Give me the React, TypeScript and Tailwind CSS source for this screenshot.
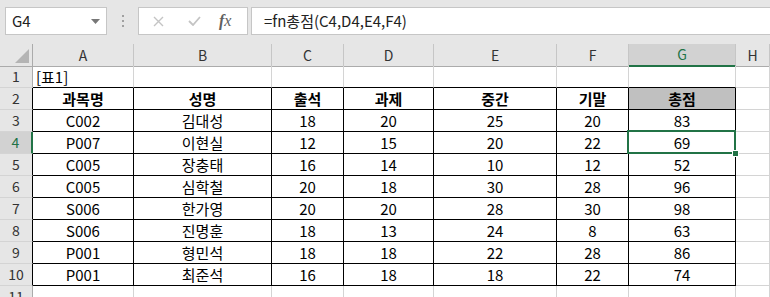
import React from 'react';

const cols = ['A', 'B', 'C', 'D', 'E', 'F', 'G', 'H'];

const rows: string[][] = [
  ['C002', '김대성', '18', '20', '25', '20', '83'],
  ['P007', '이현실', '12', '15', '20', '22', '69'],
  ['C005', '장충태', '16', '14', '10', '12', '52'],
  ['C005', '심학철', '20', '18', '30', '28', '96'],
  ['S006', '한가영', '20', '20', '28', '30', '98'],
  ['S006', '진명훈', '18', '13', '24', '8', '63'],
  ['P001', '형민석', '18', '18', '22', '28', '86'],
  ['P001', '최준석', '16', '18', '18', '22', '74'],
];

const heads = ['과목명', '성명', '출석', '과제', '중간', '기말', '총점'];

const gridCols = 'grid grid-cols-[33px_101px_138px_72px_90px_123px_72px_107px_1fr]';
const font = { fontFamily: '"Noto Sans CJK KR", "Noto Sans", sans-serif' };

export default function App() {
  return (
    <div className="w-[770px] h-[297px] overflow-hidden bg-[#e6e6e6] text-[15px] text-black" style={font}>
      {/* formula bar */}
      <div className="h-[44px] flex items-start pt-[7px] pl-[5px]">
        <div className="w-[102px] h-[28px] bg-white border border-[#c6c6c6] flex items-center justify-between pl-[6px] pr-[6px]">
          <span className="text-[15px] text-[#222]">G4</span>
          <svg width="9" height="5" viewBox="0 0 9 5"><path d="M0 0h9L4.5 5z" fill="#777" /></svg>
        </div>
        <div className="w-[31px] h-[28px] flex flex-col items-center justify-center gap-[3px]">
          <span className="w-[2px] h-[2px] bg-[#a0a0a0]" />
          <span className="w-[2px] h-[2px] bg-[#a0a0a0]" />
          <span className="w-[2px] h-[2px] bg-[#a0a0a0]" />
        </div>
        <div className="w-[110px] h-[28px] bg-white border border-[#c6c6c6] flex items-center">
          <svg className="ml-[14px]" width="11" height="11" viewBox="0 0 11 11">
            <path d="M1 1l9 9M10 1l-9 9" stroke="#c4c4c4" strokeWidth="1.4" />
          </svg>
          <svg className="ml-[24px]" width="13" height="10" viewBox="0 0 13 10">
            <path d="M1 5l4 4 7-8" stroke="#c4c4c4" strokeWidth="1.8" fill="none" />
          </svg>
          <span className="ml-[18px] text-[16px] italic font-bold text-[#606060]" style={{ fontFamily: '"Liberation Serif", serif' }}>
            f<span className="font-normal">x</span>
          </span>
        </div>
        <div className="flex-1 ml-[3px] h-[28px] bg-white border border-[#c6c6c6] border-r-0 flex items-center pl-[12px] text-[15px] text-[#222]">
          =fn총점(C4,D4,E4,F4)
        </div>
      </div>

      {/* column headers */}
      <div className={`${gridCols} h-[22px]`}>
        <div className="relative border-r border-b border-[#ababab]">
          <svg className="absolute right-[3px] bottom-[3px]" width="14" height="14" viewBox="0 0 14 14">
            <path d="M14 0V14H0z" fill="#b4b4b4" />
          </svg>
        </div>
        {cols.map((c) => (
          <div
            key={c}
            className={`flex items-center justify-center text-[14px] border-r border-[#c6c6c6] ${
              c === 'G' ? 'bg-[#d2d2d2] text-[#217346] border-b-2 border-b-[#217346]' : 'text-[#333] border-b border-b-[#ababab]'
            }`}
          >
            {c}
          </div>
        ))}
      </div>

      {/* rows */}
      <div className="bg-white">
        {Array.from({ length: 11 }).map((_, i) => {
          const r = i + 1;
          const inTable = r >= 2 && r <= 10;
          const sel = r === 4;
          return (
            <div key={r} className={`${gridCols} h-[22px]`}>
              <div
                className={`flex items-center justify-center text-[14px] border-b border-b-[#d4d4d4] ${
                  sel
                    ? 'bg-[#d2d2d2] text-[#217346] border-r-2 border-r-[#217346]'
                    : inTable
                    ? 'bg-[#e6e6e6] text-[#333] border-r border-r-black'
                    : 'bg-[#e6e6e6] text-[#333] border-r border-r-[#ababab]'
                }`}
              >
                {r}
              </div>
              {cols.map((c, ci) => {
                const tableCol = ci < 7;
                let cls = 'flex items-center leading-none border-r border-b ';
                cls += r === 1 && c === 'A' ? 'justify-start ' : 'justify-center ';
                if (r === 1) {
                  cls += tableCol ? 'border-r-[#d4d4d4] border-b-black ' : 'border-r-[#d4d4d4] border-b-[#d4d4d4] ';
                } else if (inTable && tableCol) {
                  cls += 'border-black ';
                } else {
                  cls += 'border-[#d4d4d4] ';
                }
                let content: React.ReactNode = null;
                if (r === 1 && c === 'A') {
                  content = <span className="pl-[3px]">[표1]</span>;
                } else if (r === 2 && tableCol) {
                  content = <span className="font-bold">{heads[ci]}</span>;
                  if (c === 'G') cls += 'bg-[#c0c0c0] ';
                } else if (r >= 3 && r <= 10 && tableCol) {
                  content = rows[r - 3][ci];
                }
                const isSel = r === 4 && c === 'G';
                return (
                  <div key={c} className={`relative ${cls} ${isSel ? 'z-10' : ''}`}>
                    {content}
                    {isSel && (
                      <>
                        <div className="absolute left-[-2px] top-[-2px] right-[-1px] bottom-[-1px] border-2 border-[#217346]" />
                        <div className="absolute right-[-4px] bottom-[-4px] w-[7px] h-[7px] bg-[#217346] border border-white" />
                      </>
                    )}
                  </div>
                );
              })}
            </div>
          );
        })}
      </div>
    </div>
  );
}
